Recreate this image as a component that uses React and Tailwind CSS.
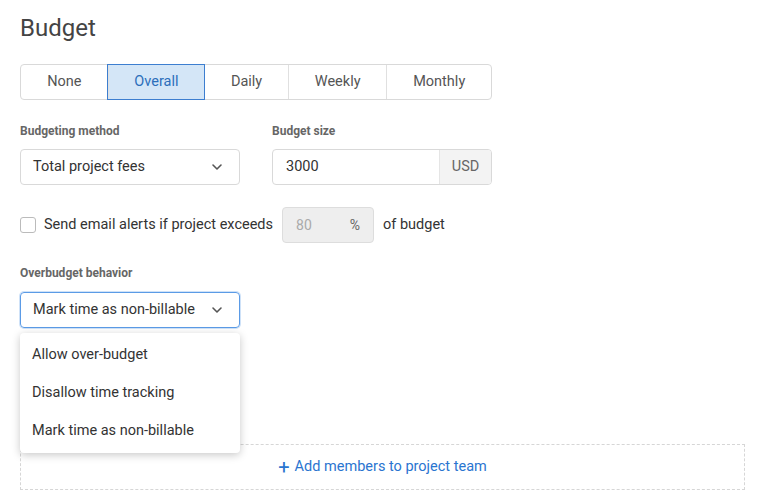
import React, { useState } from "react";

const tabs = [
  { label: "None", w: "w-[87px]" },
  { label: "Overall", w: "w-[97px]" },
  { label: "Daily", w: "w-[84px]" },
  { label: "Weekly", w: "w-[99px]" },
  { label: "Monthly", w: "w-[105px]" },
];

const Chevron = () => (
  <svg width="12" height="8" viewBox="0 0 12 8" fill="none">
    <path d="M2 2l4 4 4-4" stroke="#555" strokeWidth="1.6" strokeLinecap="round" strokeLinejoin="round" />
  </svg>
);

const App = () => {
  const [active, setActive] = useState("Overall");

  return (
    <div className="min-h-screen bg-white pl-5 pr-[18px] pt-[12px] text-[#333] font-['Roboto',sans-serif]">
      <h1 className="text-[24px] leading-8 text-[#444]">Budget</h1>

      {/* Budget type tabs */}
      <div className="mt-[20px] flex h-9 w-[472px] rounded border border-[#d9d9d9]">
        {tabs.map((t, i) => (
          <button
            key={t.label}
            onClick={() => setActive(t.label)}
            className={`${t.w} text-[14.5px] ${
              active === t.label
                ? "bg-[#d4e6f7] text-[#2c6fbb] outline outline-1 outline-[#3c7ed0] relative z-10"
                : "text-[#555]"
            } ${i > 0 ? "border-l border-[#e0e0e0]" : ""}`}
          >
            {t.label}
          </button>
        ))}
      </div>

      {/* Method and size */}
      <div className="mt-[23px] flex gap-8">
        <div className="w-[220px]">
          <div className="text-[12px] font-bold leading-4 text-[#666]">Budgeting method</div>
          <div className="mt-[10px] flex h-9 items-center justify-between rounded border border-[#d9d9d9] pl-3 pr-4 text-[14.5px]">
            <span>Total project fees</span>
            <Chevron />
          </div>
        </div>
        <div className="w-[220px]">
          <div className="text-[12px] font-bold leading-4 text-[#666]">Budget size</div>
          <div className="mt-[10px] flex h-9 overflow-hidden rounded border border-[#d9d9d9] text-[14.5px]">
            <div className="flex flex-1 items-center pl-[13px]">3000</div>
            <div className="flex w-[52px] items-center justify-center border-l border-[#e5e5e5] bg-[#f3f3f3] text-[#666]">
              USD
            </div>
          </div>
        </div>
      </div>

      {/* Email alerts */}
      <div className="mt-[22px] flex h-9 items-center text-[14.5px]">
        <span className="h-4 w-4 rounded-[3px] border border-[#bbb]" />
        <span className="ml-2">Send email alerts if project exceeds</span>
        <div className="ml-[9px] flex h-9 w-[92px] items-center justify-between rounded border border-[#ddd] bg-[#eeeeee] pl-[13px] pr-[13px] text-[14px]">
          <span className="text-[#aaa]">80</span>
          <span className="text-[#666]">%</span>
        </div>
        <span className="ml-[9px]">of budget</span>
      </div>

      {/* Overbudget behavior */}
      <div className="mt-[22px] text-[12px] font-bold leading-4 text-[#666]">Overbudget behavior</div>
      <div className="relative mt-[11px] w-[220px]">
        <div className="flex h-9 items-center justify-between rounded border border-[#5b9be6] pl-3 pr-4 text-[14.5px] ring-1 ring-[#cfe2f8]">
          <span>Mark time as non-billable</span>
          <Chevron />
        </div>
        <div className="absolute left-0 top-[41px] z-20 w-[220px] rounded bg-white pt-[3px] pb-[3px] text-[14.5px] shadow-[0_2px_8px_rgba(0,0,0,0.22)]">
          <div className="flex h-[38px] items-center px-3">Allow over-budget</div>
          <div className="flex h-[38px] items-center px-3">Disallow time tracking</div>
          <div className="flex h-[38px] items-center px-3">Mark time as non-billable</div>
        </div>
      </div>

      {/* Team */}
      <div className="mt-[116px] flex h-[46px] items-center justify-center border border-dashed border-[#d6d6d6] text-[14.5px] text-[#2a75d0]">
        <span className="mr-[5px] text-[20px] leading-none">+</span>
        Add members to project team
      </div>
    </div>
  );
};

export default App;
